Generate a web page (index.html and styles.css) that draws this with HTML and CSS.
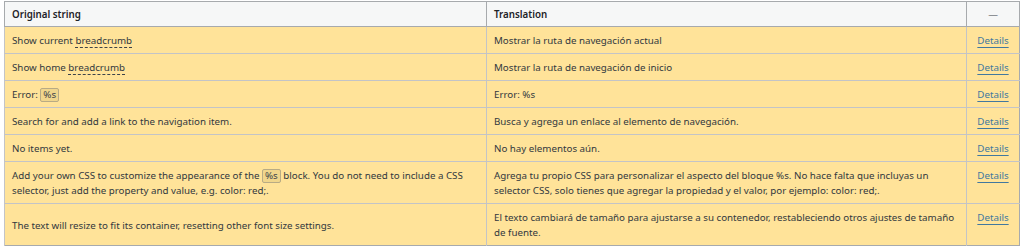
FILE: index.html
```html
<!DOCTYPE html>
<html>
<head>
<meta charset="utf-8">
<link rel="stylesheet" href="styles.css">
</head>
<body>
<table class="strings">
  <colgroup>
    <col class="c-orig">
    <col class="c-trans">
    <col class="c-act">
  </colgroup>
  <thead>
    <tr>
      <th class="h-orig">Original string</th>
      <th class="h-trans">Translation</th>
      <th class="h-act">—</th>
    </tr>
  </thead>
  <tbody>
    <tr>
      <td>Show current <span class="term">breadcrumb</span></td>
      <td>Mostrar la ruta de navegación actual</td>
      <td class="act"><a href="#">Details</a></td>
    </tr>
    <tr>
      <td>Show home <span class="term">breadcrumb</span></td>
      <td>Mostrar la ruta de navegación de inicio</td>
      <td class="act"><a href="#">Details</a></td>
    </tr>
    <tr>
      <td>Error: <span class="ph">%s</span></td>
      <td>Error: %s</td>
      <td class="act"><a href="#">Details</a></td>
    </tr>
    <tr>
      <td>Search for and add a link to the navigation item.</td>
      <td>Busca y agrega un enlace al elemento de navegación.</td>
      <td class="act"><a href="#">Details</a></td>
    </tr>
    <tr>
      <td>No items yet.</td>
      <td>No hay elementos aún.</td>
      <td class="act"><a href="#">Details</a></td>
    </tr>
    <tr>
      <td>Add your own CSS to customize the appearance of the <span class="ph">%s</span> block. You do not need to include a CSS selector, just add the property and value, e.g. color: red;.</td>
      <td>Agrega tu propio CSS para personalizar el aspecto del bloque %s. No hace falta que incluyas un selector CSS, solo tienes que agregar la propiedad y el valor, por ejemplo: color: red;.</td>
      <td class="act"><a href="#">Details</a></td>
    </tr>
    <tr>
      <td>The text will resize to fit its container, resetting other font size settings.</td>
      <td>El texto cambiará de tamaño para ajustarse a su contenedor, restableciendo otros ajustes de tamaño de fuente.</td>
      <td class="act"><a href="#">Details</a></td>
    </tr>
  </tbody>
</table>
</body>
</html>
```
FILE: styles.css
```css
html, body {
  margin: 0;
  padding: 0;
  background: #ffffff;
}

body {
  padding: 1px 3px 0 4px;
  font-family: "Noto Sans", "Open Sans", sans-serif;
  font-size: 9.75px;
  color: #32383e;
}

.strings {
  width: 1015px;
  border-collapse: collapse;
  table-layout: fixed;
  border: 1px solid #a7aaad;
}

.c-orig { width: 482px; }
.c-trans { width: 480px; }
.c-act { width: 53px; }

.strings th {
  background: #f6f7f7;
  border-bottom: 1px solid #a7aaad;
  border-left: 1px solid #a7aaad;
  font-weight: 600;
  text-align: left;
  padding: 6px 7px 4px;
  height: 14px;
  line-height: 14px;
  color: #1d2327;
}

.strings th.h-act {
  text-align: center;
  font-weight: 400;
  color: #3c434a;
}

.strings td {
  background: #ffe399;
  border-top: 1px solid #c3c4c7;
  border-left: 1px solid #c3c4c7;
  padding: 6px 7px 5px;
  line-height: 15px;
  vertical-align: middle;
}

.strings tbody tr:first-child td {
  border-top: none;
}

.strings td.act {
  text-align: center;
  vertical-align: top;
  padding: 6px 2px 5px;
}

.act a {
  color: #41789f;
  text-decoration: underline;
  text-underline-offset: 3px;
}

.term {
  border-bottom: 1px dashed #3c434a;
}

.ph {
  display: inline-block;
  background: #f0d68c;
  border: 1px solid #b8ab85;
  border-radius: 2px;
  padding: 0 2px;
  line-height: 12px;
  color: #3c434a;
}
```
